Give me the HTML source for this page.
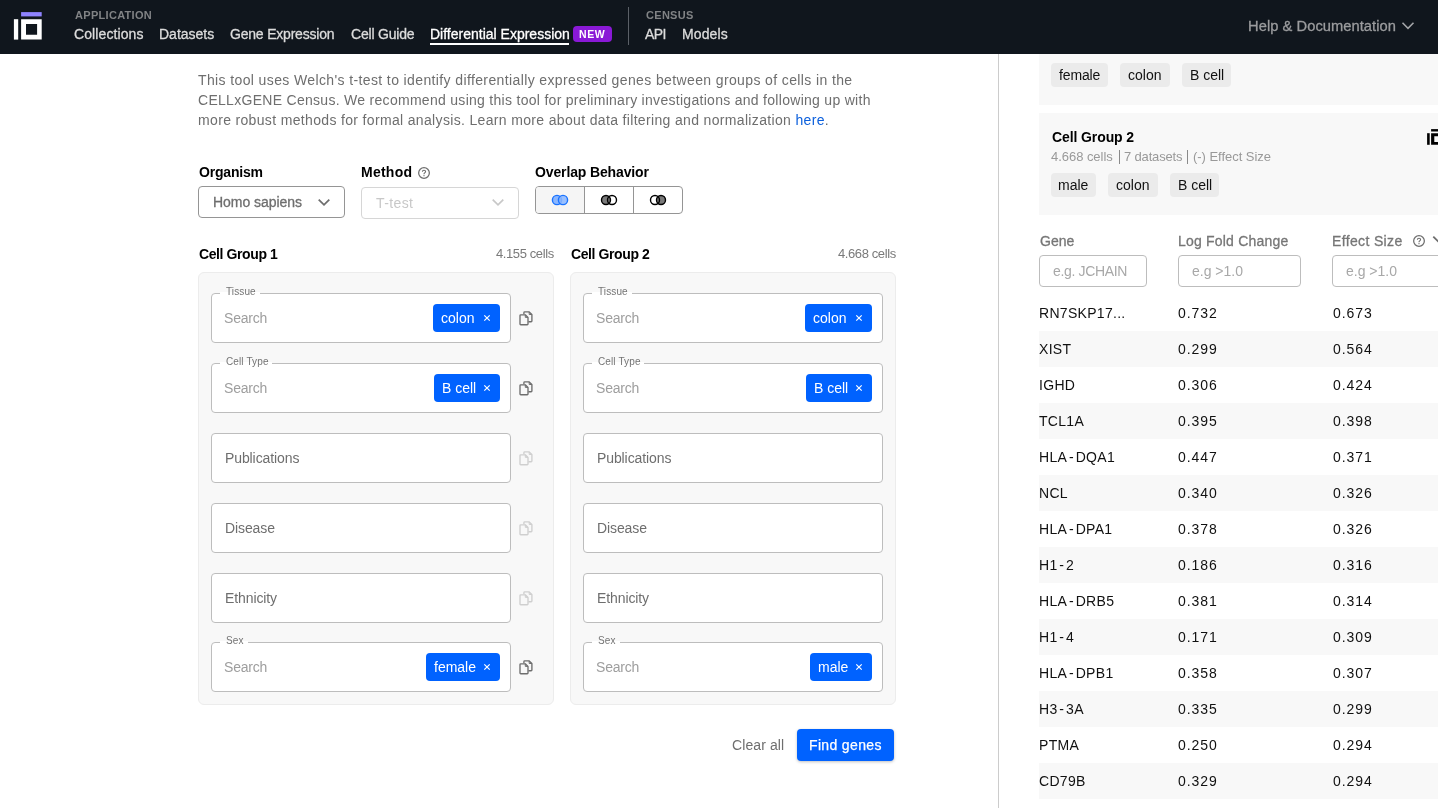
<!DOCTYPE html>
<html><head><meta charset="utf-8"><style>
html,body{margin:0;padding:0}
body{width:1438px;height:808px;overflow:hidden;position:relative;background:#fff;font-family:"Liberation Sans", sans-serif}
.t{position:absolute;white-space:nowrap;will-change:transform}
.r{position:absolute;box-sizing:border-box}
</style></head><body>
<div class="r" style="left:0px;top:0px;width:1438px;height:54px;background:#10161d"></div>
<svg class="r" style="left:0;top:0" width="60" height="54" viewBox="0 0 60 54">
<rect x="21.1" y="12.1" width="20.6" height="4.3" fill="#8f83ff"/>
<rect x="13.9" y="19.2" width="4.3" height="20.4" fill="#fff"/>
<path fill="#fff" fill-rule="evenodd" d="M21.1 19.2H41.7V39.6H21.1Z M26 23.9V34.8H37.1V23.9Z"/>
</svg>
<div class="t" style="left:74.5px;top:7px;font-size:11px;line-height:17px;font-weight:700;color:#818385;letter-spacing:0.3px;">APPLICATION</div>
<div class="t" style="left:74px;top:24px;font-size:14px;line-height:21px;font-weight:400;color:#dcdcdc;letter-spacing:0.1px;-webkit-text-stroke:0.3px currentColor">Collections</div>
<div class="t" style="left:158.5px;top:24px;font-size:14px;line-height:21px;font-weight:400;color:#dcdcdc;letter-spacing:0px;-webkit-text-stroke:0.3px currentColor">Datasets</div>
<div class="t" style="left:230.4px;top:24px;font-size:14px;line-height:21px;font-weight:400;color:#dcdcdc;letter-spacing:-0.2px;-webkit-text-stroke:0.3px currentColor">Gene Expression</div>
<div class="t" style="left:350.8px;top:24px;font-size:14px;line-height:21px;font-weight:400;color:#dcdcdc;letter-spacing:-0.2px;-webkit-text-stroke:0.3px currentColor">Cell Guide</div>
<div class="t" style="left:430.1px;top:24px;font-size:14px;line-height:21px;font-weight:400;color:#fff;letter-spacing:0px;-webkit-text-stroke:0.3px currentColor">Differential Expression</div>
<div class="r" style="left:430px;top:43px;width:139px;height:2px;background:#fff"></div>
<div class="r" style="left:573px;top:26px;width:39px;height:16px;background:#8a19d6;border-radius:4px"></div>
<div class="t" style="left:579.4px;top:26px;font-size:10.5px;line-height:16px;font-weight:700;color:#fff;letter-spacing:0.6px;">NEW</div>
<div class="r" style="left:628px;top:7px;width:1px;height:38px;background:#5b6067"></div>
<div class="t" style="left:645.6px;top:7px;font-size:11px;line-height:17px;font-weight:700;color:#818385;letter-spacing:0.3px;">CENSUS</div>
<div class="t" style="left:645.4px;top:24px;font-size:14px;line-height:21px;font-weight:400;color:#dcdcdc;letter-spacing:-0.6px;-webkit-text-stroke:0.3px currentColor">API</div>
<div class="t" style="left:681.5px;top:24px;font-size:14px;line-height:21px;font-weight:400;color:#dcdcdc;letter-spacing:0.1px;-webkit-text-stroke:0.3px currentColor">Models</div>
<div class="t" style="left:1247.5px;top:15px;font-size:14.7px;line-height:23px;font-weight:400;color:#9b9c9e;letter-spacing:0.05px;-webkit-text-stroke:0.3px currentColor">Help &amp; Documentation</div>
<svg class="r" style="left:1400px;top:20px" width="16" height="12" viewBox="0 0 16 12"><path d="M2.5 2.8L8 8.3L13.5 2.8" fill="none" stroke="#a3a5a8" stroke-width="1.6"/></svg>
<div class="t" style="left:198px;top:70px;font-size:14px;line-height:21px;font-weight:400;color:#6e6e6e;letter-spacing:0.38px;">This tool uses Welch's t-test to identify differentially expressed genes between groups of cells in the</div>
<div class="t" style="left:198px;top:90px;font-size:14px;line-height:21px;font-weight:400;color:#6e6e6e;letter-spacing:0.29px;">CELLxGENE Census. We recommend using this tool for preliminary investigations and following up with</div>
<div class="t" style="left:198px;top:110px;font-size:14px;line-height:21px;font-weight:400;color:#6e6e6e;letter-spacing:0.34px;">more robust methods for formal analysis. Learn more about data filtering and normalization <span style='color:#0b5fdc'>here</span>.</div>
<div class="t" style="left:198.5px;top:162px;font-size:14px;line-height:21px;font-weight:700;color:#000;letter-spacing:-0.2px;">Organism</div>
<div class="t" style="left:360.6px;top:162px;font-size:14px;line-height:21px;font-weight:700;color:#000;letter-spacing:0.25px;">Method</div>
<div class="t" style="left:535.2px;top:162px;font-size:14px;line-height:21px;font-weight:700;color:#000;letter-spacing:-0.13px;">Overlap Behavior</div>
<svg class="r" style="left:417px;top:166px" width="14" height="14" viewBox="0 0 14 14"><circle cx="7" cy="7" r="5.35" fill="none" stroke="#6e6e6e" stroke-width="1.25"/><path d="M5.4 5.7Q5.4 4.3 7 4.3Q8.6 4.3 8.6 5.6Q8.6 6.4 7.6 6.9Q7 7.2 7 8V8.3" fill="none" stroke="#6e6e6e" stroke-width="1.1"/><circle cx="7" cy="9.7" r="0.65" fill="#6e6e6e"/></svg>
<div class="r" style="left:198px;top:186px;width:147px;height:32px;border:1px solid #959595;border-radius:4px;background:#fff"></div>
<div class="t" style="left:213.2px;top:192px;font-size:14px;line-height:21px;font-weight:400;color:#6e6e6e;letter-spacing:-0.05px;-webkit-text-stroke:0.3px currentColor">Homo sapiens</div>
<svg class="r" style="left:316.3px;top:196.5px" width="16" height="10.5" viewBox="0 0 16 10.5"><path d="M2.7 2.7L8.0 7.8L13.3 2.7" fill="none" stroke="#6e6e6e" stroke-width="1.8"/></svg>
<div class="r" style="left:361px;top:187px;width:158px;height:32px;border:1px solid #d6d6d6;border-radius:4px;background:#fff"></div>
<div class="t" style="left:376.3px;top:193px;font-size:14px;line-height:21px;font-weight:400;color:#c8c8c8;letter-spacing:0.4px;">T-test</div>
<svg class="r" style="left:490px;top:197.1px" width="16" height="10.5" viewBox="0 0 16 10.5"><path d="M2.7 2.7L8.0 7.8L13.3 2.7" fill="none" stroke="#c8c8c8" stroke-width="1.7"/></svg>
<div class="r" style="left:535px;top:186px;width:148px;height:28px;border:1px solid #959595;border-radius:4px;background:#fff;overflow:hidden"></div>
<div class="r" style="left:536px;top:187px;width:48px;height:26px;background:#f5f5f5;border-radius:3px 0 0 3px"></div>
<div class="r" style="left:584px;top:187px;width:1px;height:26px;background:#959595"></div>
<div class="r" style="left:633px;top:187px;width:1px;height:26px;background:#959595"></div>
<svg class="r" style="left:548px;top:190px" width="24" height="20" viewBox="0 0 24 20">
<circle cx="9" cy="10" r="4.6" fill="#8ab6ff" stroke="#1a73ff" stroke-width="1.4"/>
<circle cx="15" cy="10" r="4.6" fill="#8ab6ff" fill-opacity="0.85" stroke="#1a73ff" stroke-width="1.4"/>
</svg>
<svg class="r" style="left:597px;top:190px" width="24" height="20" viewBox="0 0 24 20">
<circle cx="9" cy="10" r="4.5" fill="#7a7a7a" stroke="#000" stroke-width="1.4"/>
<circle cx="15" cy="10" r="4.5" fill="none" stroke="#000" stroke-width="1.4"/>
</svg>
<svg class="r" style="left:646px;top:190px" width="24" height="20" viewBox="0 0 24 20">
<circle cx="15" cy="10" r="4.5" fill="#7a7a7a" stroke="#000" stroke-width="1.4"/>
<circle cx="9" cy="10" r="4.5" fill="none" stroke="#000" stroke-width="1.4"/>
</svg>
<div class="t" style="left:198.5px;top:244px;font-size:14px;line-height:21px;font-weight:700;color:#000;letter-spacing:-0.4px;">Cell Group 1</div>
<div class="t" style="right:884px;top:244px;font-size:13px;line-height:20px;font-weight:400;color:#7a7a7a;letter-spacing:-0.4px;">4.155 cells</div>
<div class="r" style="left:198px;top:272px;width:356px;height:433px;background:#f8f8f8;border:1px solid #ececec;border-radius:6px"></div>
<div class="r" style="left:211px;top:293px;width:300px;height:50px;border:1px solid #bdbdbd;border-radius:4px;background:#fff"></div>
<div class="r" style="left:219.5px;top:292px;width:40.1px;height:3px;background:#fff"></div>
<div class="r" style="left:219.5px;top:287px;width:40.1px;height:5px;background:#f8f8f8"></div>
<div class="t" style="left:225.6px;top:284px;font-size:10px;line-height:15px;font-weight:400;color:#747474;letter-spacing:0.12px;">Tissue</div>
<div class="t" style="left:223.8px;top:308px;font-size:14px;line-height:21px;font-weight:400;color:#9e9e9e;letter-spacing:-0.2px;">Search</div>
<div class="r" style="left:433px;top:304px;width:67px;height:28px;background:#0062ff;border-radius:4px"></div>
<div class="t" style="left:441px;top:308px;font-size:14px;line-height:21px;font-weight:400;color:#fff;letter-spacing:0px;">colon</div>
<svg class="r" style="left:483.2px;top:314.2px" width="8" height="8" viewBox="0 0 8 8"><path d="M1.3 1.3L6.7 6.7M6.7 1.3L1.3 6.7" stroke="#fff" stroke-width="1.2"/></svg>
<svg class="r" style="left:518.5px;top:310.5px" width="15" height="15" viewBox="0 0 15 15" fill="none" stroke="#6e6e6e" stroke-width="1.35" stroke-linejoin="round"><path d="M4.9 3.3V1.7Q4.9 0.9 5.7 0.9H10.2L12.9 3.5V9.9Q12.9 10.7 12.1 10.7H9.4"/><path d="M1 4.6Q1 3.8 1.8 3.8H6.3L9 6.4V12.9Q9 13.7 8.2 13.7H1.8Q1 13.7 1 12.9Z"/><path d="M10.2 0.9V3.5H12.9M6.3 3.8V6.4H9" stroke-width="1"/></svg>
<div class="r" style="left:211px;top:363px;width:300px;height:50px;border:1px solid #bdbdbd;border-radius:4px;background:#fff"></div>
<div class="r" style="left:219.5px;top:362px;width:52.5px;height:3px;background:#fff"></div>
<div class="r" style="left:219.5px;top:357px;width:52.5px;height:5px;background:#f8f8f8"></div>
<div class="t" style="left:225.6px;top:354px;font-size:10px;line-height:15px;font-weight:400;color:#747474;letter-spacing:0.12px;">Cell Type</div>
<div class="t" style="left:223.8px;top:378px;font-size:14px;line-height:21px;font-weight:400;color:#9e9e9e;letter-spacing:-0.2px;">Search</div>
<div class="r" style="left:434px;top:374px;width:66px;height:28px;background:#0062ff;border-radius:4px"></div>
<div class="t" style="left:442px;top:378px;font-size:14px;line-height:21px;font-weight:400;color:#fff;letter-spacing:0px;">B cell</div>
<svg class="r" style="left:483.2px;top:384.2px" width="8" height="8" viewBox="0 0 8 8"><path d="M1.3 1.3L6.7 6.7M6.7 1.3L1.3 6.7" stroke="#fff" stroke-width="1.2"/></svg>
<svg class="r" style="left:518.5px;top:380.5px" width="15" height="15" viewBox="0 0 15 15" fill="none" stroke="#6e6e6e" stroke-width="1.35" stroke-linejoin="round"><path d="M4.9 3.3V1.7Q4.9 0.9 5.7 0.9H10.2L12.9 3.5V9.9Q12.9 10.7 12.1 10.7H9.4"/><path d="M1 4.6Q1 3.8 1.8 3.8H6.3L9 6.4V12.9Q9 13.7 8.2 13.7H1.8Q1 13.7 1 12.9Z"/><path d="M10.2 0.9V3.5H12.9M6.3 3.8V6.4H9" stroke-width="1"/></svg>
<div class="r" style="left:211px;top:433px;width:300px;height:50px;border:1px solid #bdbdbd;border-radius:4px;background:#fff"></div>
<div class="t" style="left:224.5px;top:448px;font-size:14px;line-height:21px;font-weight:400;color:#6e6e6e;letter-spacing:-0.1px;">Publications</div>
<svg class="r" style="left:518.5px;top:450.5px" width="15" height="15" viewBox="0 0 15 15" fill="none" stroke="#cfcfcf" stroke-width="1.35" stroke-linejoin="round"><path d="M4.9 3.3V1.7Q4.9 0.9 5.7 0.9H10.2L12.9 3.5V9.9Q12.9 10.7 12.1 10.7H9.4"/><path d="M1 4.6Q1 3.8 1.8 3.8H6.3L9 6.4V12.9Q9 13.7 8.2 13.7H1.8Q1 13.7 1 12.9Z"/><path d="M10.2 0.9V3.5H12.9M6.3 3.8V6.4H9" stroke-width="1"/></svg>
<div class="r" style="left:211px;top:503px;width:300px;height:50px;border:1px solid #bdbdbd;border-radius:4px;background:#fff"></div>
<div class="t" style="left:224.5px;top:518px;font-size:14px;line-height:21px;font-weight:400;color:#6e6e6e;letter-spacing:-0.1px;">Disease</div>
<svg class="r" style="left:518.5px;top:520.5px" width="15" height="15" viewBox="0 0 15 15" fill="none" stroke="#cfcfcf" stroke-width="1.35" stroke-linejoin="round"><path d="M4.9 3.3V1.7Q4.9 0.9 5.7 0.9H10.2L12.9 3.5V9.9Q12.9 10.7 12.1 10.7H9.4"/><path d="M1 4.6Q1 3.8 1.8 3.8H6.3L9 6.4V12.9Q9 13.7 8.2 13.7H1.8Q1 13.7 1 12.9Z"/><path d="M10.2 0.9V3.5H12.9M6.3 3.8V6.4H9" stroke-width="1"/></svg>
<div class="r" style="left:211px;top:573px;width:300px;height:50px;border:1px solid #bdbdbd;border-radius:4px;background:#fff"></div>
<div class="t" style="left:224.5px;top:588px;font-size:14px;line-height:21px;font-weight:400;color:#6e6e6e;letter-spacing:-0.1px;">Ethnicity</div>
<svg class="r" style="left:518.5px;top:590.5px" width="15" height="15" viewBox="0 0 15 15" fill="none" stroke="#cfcfcf" stroke-width="1.35" stroke-linejoin="round"><path d="M4.9 3.3V1.7Q4.9 0.9 5.7 0.9H10.2L12.9 3.5V9.9Q12.9 10.7 12.1 10.7H9.4"/><path d="M1 4.6Q1 3.8 1.8 3.8H6.3L9 6.4V12.9Q9 13.7 8.2 13.7H1.8Q1 13.7 1 12.9Z"/><path d="M10.2 0.9V3.5H12.9M6.3 3.8V6.4H9" stroke-width="1"/></svg>
<div class="r" style="left:211px;top:642px;width:300px;height:50px;border:1px solid #bdbdbd;border-radius:4px;background:#fff"></div>
<div class="r" style="left:219.5px;top:641px;width:28.2px;height:3px;background:#fff"></div>
<div class="r" style="left:219.5px;top:636px;width:28.2px;height:5px;background:#f8f8f8"></div>
<div class="t" style="left:225.6px;top:633px;font-size:10px;line-height:15px;font-weight:400;color:#747474;letter-spacing:0.12px;">Sex</div>
<div class="t" style="left:223.8px;top:657px;font-size:14px;line-height:21px;font-weight:400;color:#9e9e9e;letter-spacing:-0.2px;">Search</div>
<div class="r" style="left:426px;top:653px;width:74px;height:28px;background:#0062ff;border-radius:4px"></div>
<div class="t" style="left:434px;top:657px;font-size:14px;line-height:21px;font-weight:400;color:#fff;letter-spacing:0px;">female</div>
<svg class="r" style="left:483.2px;top:663.2px" width="8" height="8" viewBox="0 0 8 8"><path d="M1.3 1.3L6.7 6.7M6.7 1.3L1.3 6.7" stroke="#fff" stroke-width="1.2"/></svg>
<svg class="r" style="left:518.5px;top:659.5px" width="15" height="15" viewBox="0 0 15 15" fill="none" stroke="#6e6e6e" stroke-width="1.35" stroke-linejoin="round"><path d="M4.9 3.3V1.7Q4.9 0.9 5.7 0.9H10.2L12.9 3.5V9.9Q12.9 10.7 12.1 10.7H9.4"/><path d="M1 4.6Q1 3.8 1.8 3.8H6.3L9 6.4V12.9Q9 13.7 8.2 13.7H1.8Q1 13.7 1 12.9Z"/><path d="M10.2 0.9V3.5H12.9M6.3 3.8V6.4H9" stroke-width="1"/></svg>
<div class="t" style="left:570.5px;top:244px;font-size:14px;line-height:21px;font-weight:700;color:#000;letter-spacing:-0.4px;">Cell Group 2</div>
<div class="t" style="right:542px;top:244px;font-size:13px;line-height:20px;font-weight:400;color:#7a7a7a;letter-spacing:-0.4px;">4.668 cells</div>
<div class="r" style="left:570px;top:272px;width:326px;height:433px;background:#f8f8f8;border:1px solid #ececec;border-radius:6px"></div>
<div class="r" style="left:583px;top:293px;width:300px;height:50px;border:1px solid #bdbdbd;border-radius:4px;background:#fff"></div>
<div class="r" style="left:591.5px;top:292px;width:40.1px;height:3px;background:#fff"></div>
<div class="r" style="left:591.5px;top:287px;width:40.1px;height:5px;background:#f8f8f8"></div>
<div class="t" style="left:597.6px;top:284px;font-size:10px;line-height:15px;font-weight:400;color:#747474;letter-spacing:0.12px;">Tissue</div>
<div class="t" style="left:595.8px;top:308px;font-size:14px;line-height:21px;font-weight:400;color:#9e9e9e;letter-spacing:-0.2px;">Search</div>
<div class="r" style="left:805px;top:304px;width:67px;height:28px;background:#0062ff;border-radius:4px"></div>
<div class="t" style="left:813px;top:308px;font-size:14px;line-height:21px;font-weight:400;color:#fff;letter-spacing:0px;">colon</div>
<svg class="r" style="left:855.2px;top:314.2px" width="8" height="8" viewBox="0 0 8 8"><path d="M1.3 1.3L6.7 6.7M6.7 1.3L1.3 6.7" stroke="#fff" stroke-width="1.2"/></svg>
<div class="r" style="left:583px;top:363px;width:300px;height:50px;border:1px solid #bdbdbd;border-radius:4px;background:#fff"></div>
<div class="r" style="left:591.5px;top:362px;width:52.5px;height:3px;background:#fff"></div>
<div class="r" style="left:591.5px;top:357px;width:52.5px;height:5px;background:#f8f8f8"></div>
<div class="t" style="left:597.6px;top:354px;font-size:10px;line-height:15px;font-weight:400;color:#747474;letter-spacing:0.12px;">Cell Type</div>
<div class="t" style="left:595.8px;top:378px;font-size:14px;line-height:21px;font-weight:400;color:#9e9e9e;letter-spacing:-0.2px;">Search</div>
<div class="r" style="left:806px;top:374px;width:66px;height:28px;background:#0062ff;border-radius:4px"></div>
<div class="t" style="left:814px;top:378px;font-size:14px;line-height:21px;font-weight:400;color:#fff;letter-spacing:0px;">B cell</div>
<svg class="r" style="left:855.2px;top:384.2px" width="8" height="8" viewBox="0 0 8 8"><path d="M1.3 1.3L6.7 6.7M6.7 1.3L1.3 6.7" stroke="#fff" stroke-width="1.2"/></svg>
<div class="r" style="left:583px;top:433px;width:300px;height:50px;border:1px solid #bdbdbd;border-radius:4px;background:#fff"></div>
<div class="t" style="left:596.5px;top:448px;font-size:14px;line-height:21px;font-weight:400;color:#6e6e6e;letter-spacing:-0.1px;">Publications</div>
<div class="r" style="left:583px;top:503px;width:300px;height:50px;border:1px solid #bdbdbd;border-radius:4px;background:#fff"></div>
<div class="t" style="left:596.5px;top:518px;font-size:14px;line-height:21px;font-weight:400;color:#6e6e6e;letter-spacing:-0.1px;">Disease</div>
<div class="r" style="left:583px;top:573px;width:300px;height:50px;border:1px solid #bdbdbd;border-radius:4px;background:#fff"></div>
<div class="t" style="left:596.5px;top:588px;font-size:14px;line-height:21px;font-weight:400;color:#6e6e6e;letter-spacing:-0.1px;">Ethnicity</div>
<div class="r" style="left:583px;top:642px;width:300px;height:50px;border:1px solid #bdbdbd;border-radius:4px;background:#fff"></div>
<div class="r" style="left:591.5px;top:641px;width:28.2px;height:3px;background:#fff"></div>
<div class="r" style="left:591.5px;top:636px;width:28.2px;height:5px;background:#f8f8f8"></div>
<div class="t" style="left:597.6px;top:633px;font-size:10px;line-height:15px;font-weight:400;color:#747474;letter-spacing:0.12px;">Sex</div>
<div class="t" style="left:595.8px;top:657px;font-size:14px;line-height:21px;font-weight:400;color:#9e9e9e;letter-spacing:-0.2px;">Search</div>
<div class="r" style="left:810px;top:653px;width:62px;height:28px;background:#0062ff;border-radius:4px"></div>
<div class="t" style="left:818px;top:657px;font-size:14px;line-height:21px;font-weight:400;color:#fff;letter-spacing:0px;">male</div>
<svg class="r" style="left:855.2px;top:663.2px" width="8" height="8" viewBox="0 0 8 8"><path d="M1.3 1.3L6.7 6.7M6.7 1.3L1.3 6.7" stroke="#fff" stroke-width="1.2"/></svg>
<div class="t" style="left:732px;top:735px;font-size:14px;line-height:21px;font-weight:400;color:#6e6e6e;letter-spacing:0.1px;">Clear all</div>
<div class="r" style="left:797px;top:729px;width:97px;height:32px;background:#0062ff;border-radius:4px;box-shadow:0 1px 3px rgba(0,0,0,0.25)"></div>
<div class="t" style="left:808.7px;top:735px;font-size:14px;line-height:21px;font-weight:400;color:#fff;letter-spacing:0.35px;-webkit-text-stroke:0.25px #fff">Find genes</div>
<div class="r" style="left:998px;top:54px;width:1px;height:754px;background:#cccccc"></div>
<div class="r" style="left:1039px;top:54px;width:399px;height:51px;background:#f8f8f8"></div>
<div class="r" style="left:1051px;top:63px;width:57px;height:24px;background:#ebebeb;border-radius:4px"></div>
<div class="t" style="left:1059px;top:65px;font-size:14px;line-height:21px;font-weight:400;color:#111;letter-spacing:-0.15px;">female</div>
<div class="r" style="left:1120px;top:63px;width:50px;height:24px;background:#ebebeb;border-radius:4px"></div>
<div class="t" style="left:1128px;top:65px;font-size:14px;line-height:21px;font-weight:400;color:#111;letter-spacing:0px;">colon</div>
<div class="r" style="left:1182px;top:63px;width:49px;height:24px;background:#ebebeb;border-radius:4px"></div>
<div class="t" style="left:1190px;top:65px;font-size:14px;line-height:21px;font-weight:400;color:#111;letter-spacing:0px;">B cell</div>
<div class="r" style="left:1039px;top:113px;width:399px;height:102px;background:#f8f8f8"></div>
<div class="t" style="left:1051.5px;top:127px;font-size:14px;line-height:21px;font-weight:700;color:#000;letter-spacing:-0.1px;">Cell Group 2</div>
<div class="t" style="left:1051.2px;top:147px;font-size:13px;line-height:20px;font-weight:400;color:#999;letter-spacing:-0.04px;">4.668 cells</div>
<div class="r" style="left:1118.5px;top:150px;width:1px;height:14px;background:#8a8a8a"></div>
<div class="t" style="left:1123.8px;top:147px;font-size:13px;line-height:20px;font-weight:400;color:#999;letter-spacing:-0.16px;">7 datasets</div>
<div class="r" style="left:1187px;top:150px;width:1px;height:14px;background:#8a8a8a"></div>
<div class="t" style="left:1193.3px;top:147px;font-size:13px;line-height:20px;font-weight:400;color:#999;letter-spacing:-0.04px;">(-) Effect Size</div>
<div class="r" style="left:1051px;top:173px;width:45px;height:24px;background:#ebebeb;border-radius:4px"></div>
<div class="t" style="left:1058px;top:175px;font-size:14px;line-height:21px;font-weight:400;color:#111;letter-spacing:0px;">male</div>
<div class="r" style="left:1108px;top:173px;width:50px;height:24px;background:#ebebeb;border-radius:4px"></div>
<div class="t" style="left:1116px;top:175px;font-size:14px;line-height:21px;font-weight:400;color:#111;letter-spacing:0px;">colon</div>
<div class="r" style="left:1170px;top:173px;width:49px;height:24px;background:#ebebeb;border-radius:4px"></div>
<div class="t" style="left:1178px;top:175px;font-size:14px;line-height:21px;font-weight:400;color:#111;letter-spacing:0px;">B cell</div>
<svg class="r" style="left:1427px;top:129px" width="16" height="16" viewBox="0 0 16 16">
<rect x="4.1" y="0.1" width="11" height="2.4" fill="#000"/>
<rect x="0.1" y="4.2" width="2.6" height="11.6" fill="#000"/>
<path fill="#000" fill-rule="evenodd" d="M4.1 4.2H15.5V15.8H4.1Z M7.3 7.2V13.1H12.5V7.2Z"/>
</svg>
<div class="t" style="left:1039.5px;top:231px;font-size:14px;line-height:21px;font-weight:400;color:#767676;letter-spacing:0px;-webkit-text-stroke:0.3px currentColor">Gene</div>
<div class="t" style="left:1178.4px;top:231px;font-size:14px;line-height:21px;font-weight:400;color:#767676;letter-spacing:0.2px;-webkit-text-stroke:0.3px currentColor">Log Fold Change</div>
<div class="t" style="left:1331.7px;top:231px;font-size:14px;line-height:21px;font-weight:400;color:#767676;letter-spacing:0.35px;-webkit-text-stroke:0.3px currentColor">Effect Size</div>
<svg class="r" style="left:1412px;top:233.8px" width="14" height="14" viewBox="0 0 14 14"><circle cx="7" cy="7" r="5.35" fill="none" stroke="#6e6e6e" stroke-width="1.25"/><path d="M5.4 5.7Q5.4 4.3 7 4.3Q8.6 4.3 8.6 5.6Q8.6 6.4 7.6 6.9Q7 7.2 7 8V8.3" fill="none" stroke="#6e6e6e" stroke-width="1.1"/><circle cx="7" cy="9.7" r="0.65" fill="#6e6e6e"/></svg>
<svg class="r" style="left:1430px;top:233px" width="14" height="14" viewBox="0 0 14 14"><path d="M3.3 3.6L9 9.3L14.7 3.6" fill="none" stroke="#6e6e6e" stroke-width="1.8"/></svg>
<div class="r" style="left:1039px;top:255px;width:108px;height:32px;border:1px solid #bdbdbd;border-radius:4px;background:#fff"></div>
<div class="t" style="left:1053.4px;top:261px;font-size:14px;line-height:21px;font-weight:400;color:#a8a8a8;letter-spacing:-0.35px;">e.g. JCHAIN</div>
<div class="r" style="left:1178px;top:255px;width:123px;height:32px;border:1px solid #bdbdbd;border-radius:4px;background:#fff"></div>
<div class="t" style="left:1192px;top:261px;font-size:14px;line-height:21px;font-weight:400;color:#a8a8a8;letter-spacing:0px;">e.g &gt;1.0</div>
<div class="r" style="left:1332px;top:255px;width:140px;height:32px;border:1px solid #bdbdbd;border-radius:4px;background:#fff"></div>
<div class="t" style="left:1346px;top:261px;font-size:14px;line-height:21px;font-weight:400;color:#a8a8a8;letter-spacing:0px;">e.g &gt;1.0</div>
<div class="t" style="left:1039.2px;top:303px;font-size:14px;line-height:21px;font-weight:400;color:#111;letter-spacing:0.3px;">RN7SKP17...</div>
<div class="t" style="left:1178.4px;top:303px;font-size:14px;line-height:21px;font-weight:400;color:#111;letter-spacing:0.95px;">0.732</div>
<div class="t" style="left:1332.9px;top:303px;font-size:14px;line-height:21px;font-weight:400;color:#111;letter-spacing:0.95px;">0.673</div>
<div class="r" style="left:1039px;top:331px;width:399px;height:36px;background:#f8f8f8"></div>
<div class="t" style="left:1039.2px;top:339px;font-size:14px;line-height:21px;font-weight:400;color:#111;letter-spacing:0.3px;">XIST</div>
<div class="t" style="left:1178.4px;top:339px;font-size:14px;line-height:21px;font-weight:400;color:#111;letter-spacing:0.95px;">0.299</div>
<div class="t" style="left:1332.9px;top:339px;font-size:14px;line-height:21px;font-weight:400;color:#111;letter-spacing:0.95px;">0.564</div>
<div class="t" style="left:1039.2px;top:375px;font-size:14px;line-height:21px;font-weight:400;color:#111;letter-spacing:0.3px;">IGHD</div>
<div class="t" style="left:1178.4px;top:375px;font-size:14px;line-height:21px;font-weight:400;color:#111;letter-spacing:0.95px;">0.306</div>
<div class="t" style="left:1332.9px;top:375px;font-size:14px;line-height:21px;font-weight:400;color:#111;letter-spacing:0.95px;">0.424</div>
<div class="r" style="left:1039px;top:403px;width:399px;height:36px;background:#f8f8f8"></div>
<div class="t" style="left:1039.2px;top:411px;font-size:14px;line-height:21px;font-weight:400;color:#111;letter-spacing:0.3px;">TCL1A</div>
<div class="t" style="left:1178.4px;top:411px;font-size:14px;line-height:21px;font-weight:400;color:#111;letter-spacing:0.95px;">0.395</div>
<div class="t" style="left:1332.9px;top:411px;font-size:14px;line-height:21px;font-weight:400;color:#111;letter-spacing:0.95px;">0.398</div>
<div class="t" style="left:1039.2px;top:447px;font-size:14px;line-height:21px;font-weight:400;color:#111;letter-spacing:0.3px;">HLA<span style="margin:0 1.8px">-</span>DQA1</div>
<div class="t" style="left:1178.4px;top:447px;font-size:14px;line-height:21px;font-weight:400;color:#111;letter-spacing:0.95px;">0.447</div>
<div class="t" style="left:1332.9px;top:447px;font-size:14px;line-height:21px;font-weight:400;color:#111;letter-spacing:0.95px;">0.371</div>
<div class="r" style="left:1039px;top:475px;width:399px;height:36px;background:#f8f8f8"></div>
<div class="t" style="left:1039.2px;top:483px;font-size:14px;line-height:21px;font-weight:400;color:#111;letter-spacing:0.3px;">NCL</div>
<div class="t" style="left:1178.4px;top:483px;font-size:14px;line-height:21px;font-weight:400;color:#111;letter-spacing:0.95px;">0.340</div>
<div class="t" style="left:1332.9px;top:483px;font-size:14px;line-height:21px;font-weight:400;color:#111;letter-spacing:0.95px;">0.326</div>
<div class="t" style="left:1039.2px;top:519px;font-size:14px;line-height:21px;font-weight:400;color:#111;letter-spacing:0.3px;">HLA<span style="margin:0 1.8px">-</span>DPA1</div>
<div class="t" style="left:1178.4px;top:519px;font-size:14px;line-height:21px;font-weight:400;color:#111;letter-spacing:0.95px;">0.378</div>
<div class="t" style="left:1332.9px;top:519px;font-size:14px;line-height:21px;font-weight:400;color:#111;letter-spacing:0.95px;">0.326</div>
<div class="r" style="left:1039px;top:547px;width:399px;height:36px;background:#f8f8f8"></div>
<div class="t" style="left:1039.2px;top:555px;font-size:14px;line-height:21px;font-weight:400;color:#111;letter-spacing:0.3px;">H1<span style="margin:0 1.8px">-</span>2</div>
<div class="t" style="left:1178.4px;top:555px;font-size:14px;line-height:21px;font-weight:400;color:#111;letter-spacing:0.95px;">0.186</div>
<div class="t" style="left:1332.9px;top:555px;font-size:14px;line-height:21px;font-weight:400;color:#111;letter-spacing:0.95px;">0.316</div>
<div class="t" style="left:1039.2px;top:591px;font-size:14px;line-height:21px;font-weight:400;color:#111;letter-spacing:0.3px;">HLA<span style="margin:0 1.8px">-</span>DRB5</div>
<div class="t" style="left:1178.4px;top:591px;font-size:14px;line-height:21px;font-weight:400;color:#111;letter-spacing:0.95px;">0.381</div>
<div class="t" style="left:1332.9px;top:591px;font-size:14px;line-height:21px;font-weight:400;color:#111;letter-spacing:0.95px;">0.314</div>
<div class="r" style="left:1039px;top:619px;width:399px;height:36px;background:#f8f8f8"></div>
<div class="t" style="left:1039.2px;top:627px;font-size:14px;line-height:21px;font-weight:400;color:#111;letter-spacing:0.3px;">H1<span style="margin:0 1.8px">-</span>4</div>
<div class="t" style="left:1178.4px;top:627px;font-size:14px;line-height:21px;font-weight:400;color:#111;letter-spacing:0.95px;">0.171</div>
<div class="t" style="left:1332.9px;top:627px;font-size:14px;line-height:21px;font-weight:400;color:#111;letter-spacing:0.95px;">0.309</div>
<div class="t" style="left:1039.2px;top:663px;font-size:14px;line-height:21px;font-weight:400;color:#111;letter-spacing:0.3px;">HLA<span style="margin:0 1.8px">-</span>DPB1</div>
<div class="t" style="left:1178.4px;top:663px;font-size:14px;line-height:21px;font-weight:400;color:#111;letter-spacing:0.95px;">0.358</div>
<div class="t" style="left:1332.9px;top:663px;font-size:14px;line-height:21px;font-weight:400;color:#111;letter-spacing:0.95px;">0.307</div>
<div class="r" style="left:1039px;top:691px;width:399px;height:36px;background:#f8f8f8"></div>
<div class="t" style="left:1039.2px;top:699px;font-size:14px;line-height:21px;font-weight:400;color:#111;letter-spacing:0.3px;">H3<span style="margin:0 1.8px">-</span>3A</div>
<div class="t" style="left:1178.4px;top:699px;font-size:14px;line-height:21px;font-weight:400;color:#111;letter-spacing:0.95px;">0.335</div>
<div class="t" style="left:1332.9px;top:699px;font-size:14px;line-height:21px;font-weight:400;color:#111;letter-spacing:0.95px;">0.299</div>
<div class="t" style="left:1039.2px;top:735px;font-size:14px;line-height:21px;font-weight:400;color:#111;letter-spacing:0.3px;">PTMA</div>
<div class="t" style="left:1178.4px;top:735px;font-size:14px;line-height:21px;font-weight:400;color:#111;letter-spacing:0.95px;">0.250</div>
<div class="t" style="left:1332.9px;top:735px;font-size:14px;line-height:21px;font-weight:400;color:#111;letter-spacing:0.95px;">0.294</div>
<div class="r" style="left:1039px;top:763px;width:399px;height:36px;background:#f8f8f8"></div>
<div class="t" style="left:1039.2px;top:771px;font-size:14px;line-height:21px;font-weight:400;color:#111;letter-spacing:0.3px;">CD79B</div>
<div class="t" style="left:1178.4px;top:771px;font-size:14px;line-height:21px;font-weight:400;color:#111;letter-spacing:0.95px;">0.329</div>
<div class="t" style="left:1332.9px;top:771px;font-size:14px;line-height:21px;font-weight:400;color:#111;letter-spacing:0.95px;">0.294</div>
<div class="t" style="left:1039.2px;top:807px;font-size:14px;line-height:21px;font-weight:400;color:#111;letter-spacing:0.3px;">XBP1</div>
<div class="t" style="left:1178.4px;top:807px;font-size:14px;line-height:21px;font-weight:400;color:#111;letter-spacing:0.95px;">0.300</div>
<div class="t" style="left:1332.9px;top:807px;font-size:14px;line-height:21px;font-weight:400;color:#111;letter-spacing:0.95px;">0.290</div>
</body></html>
